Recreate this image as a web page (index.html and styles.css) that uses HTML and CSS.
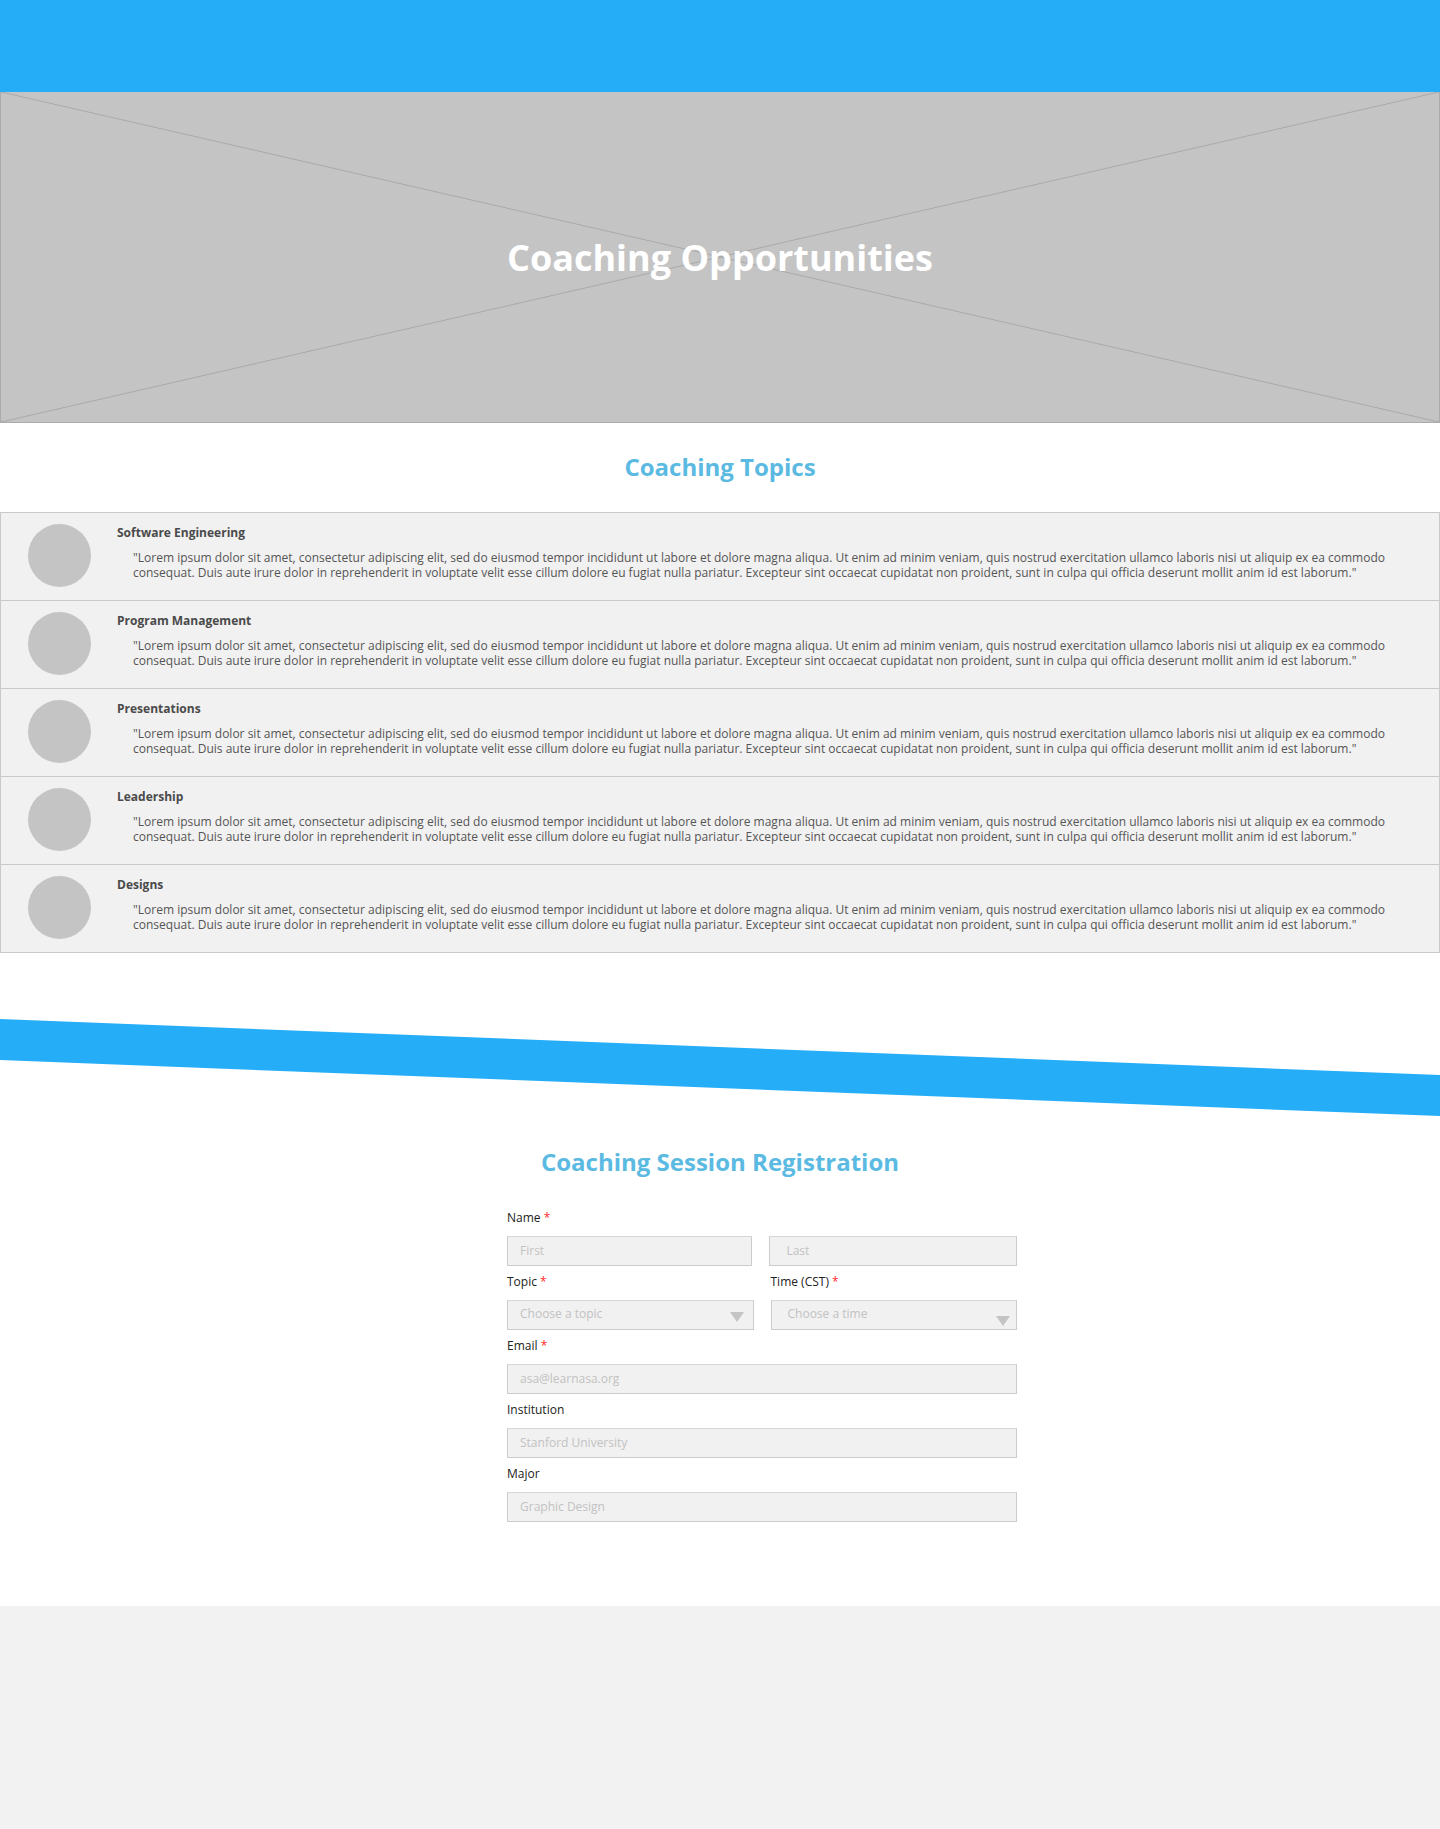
FILE: index.html
```html
<!DOCTYPE html>
<html lang="en">
<head>
<meta charset="utf-8">
<title>Coaching Opportunities</title>
<link rel="stylesheet" href="styles.css">
</head>
<body>
<header class="topbar"></header>

<section class="hero">
  <svg class="hero-x" viewBox="0 0 100 100" preserveAspectRatio="none" aria-hidden="true">
    <line x1="0" y1="0" x2="100" y2="100" vector-effect="non-scaling-stroke"/>
    <line x1="0" y1="100" x2="100" y2="0" vector-effect="non-scaling-stroke"/>
  </svg>
  <h1 class="hero-title">Coaching Opportunities</h1>
</section>

<h2 class="section-title topics-title">Coaching Topics</h2>

<ul class="topics">
  <li class="topic">
    <div class="avatar"></div>
    <div class="topic-text">
      <h3 class="topic-name">Software Engineering</h3>
      <p class="topic-desc">"Lorem ipsum dolor sit amet, consectetur adipiscing elit, sed do eiusmod tempor incididunt ut labore et dolore magna aliqua. Ut enim ad minim veniam, quis nostrud exercitation ullamco laboris nisi ut aliquip ex ea commodo consequat. Duis aute irure dolor in reprehenderit in voluptate velit esse cillum dolore eu fugiat nulla pariatur. Excepteur sint occaecat cupidatat non proident, sunt in culpa qui officia deserunt mollit anim id est laborum."</p>
    </div>
  </li>
  <li class="topic">
    <div class="avatar"></div>
    <div class="topic-text">
      <h3 class="topic-name">Program Management</h3>
      <p class="topic-desc">"Lorem ipsum dolor sit amet, consectetur adipiscing elit, sed do eiusmod tempor incididunt ut labore et dolore magna aliqua. Ut enim ad minim veniam, quis nostrud exercitation ullamco laboris nisi ut aliquip ex ea commodo consequat. Duis aute irure dolor in reprehenderit in voluptate velit esse cillum dolore eu fugiat nulla pariatur. Excepteur sint occaecat cupidatat non proident, sunt in culpa qui officia deserunt mollit anim id est laborum."</p>
    </div>
  </li>
  <li class="topic">
    <div class="avatar"></div>
    <div class="topic-text">
      <h3 class="topic-name">Presentations</h3>
      <p class="topic-desc">"Lorem ipsum dolor sit amet, consectetur adipiscing elit, sed do eiusmod tempor incididunt ut labore et dolore magna aliqua. Ut enim ad minim veniam, quis nostrud exercitation ullamco laboris nisi ut aliquip ex ea commodo consequat. Duis aute irure dolor in reprehenderit in voluptate velit esse cillum dolore eu fugiat nulla pariatur. Excepteur sint occaecat cupidatat non proident, sunt in culpa qui officia deserunt mollit anim id est laborum."</p>
    </div>
  </li>
  <li class="topic">
    <div class="avatar"></div>
    <div class="topic-text">
      <h3 class="topic-name">Leadership</h3>
      <p class="topic-desc">"Lorem ipsum dolor sit amet, consectetur adipiscing elit, sed do eiusmod tempor incididunt ut labore et dolore magna aliqua. Ut enim ad minim veniam, quis nostrud exercitation ullamco laboris nisi ut aliquip ex ea commodo consequat. Duis aute irure dolor in reprehenderit in voluptate velit esse cillum dolore eu fugiat nulla pariatur. Excepteur sint occaecat cupidatat non proident, sunt in culpa qui officia deserunt mollit anim id est laborum."</p>
    </div>
  </li>
  <li class="topic">
    <div class="avatar"></div>
    <div class="topic-text">
      <h3 class="topic-name">Designs</h3>
      <p class="topic-desc">"Lorem ipsum dolor sit amet, consectetur adipiscing elit, sed do eiusmod tempor incididunt ut labore et dolore magna aliqua. Ut enim ad minim veniam, quis nostrud exercitation ullamco laboris nisi ut aliquip ex ea commodo consequat. Duis aute irure dolor in reprehenderit in voluptate velit esse cillum dolore eu fugiat nulla pariatur. Excepteur sint occaecat cupidatat non proident, sunt in culpa qui officia deserunt mollit anim id est laborum."</p>
    </div>
  </li>
</ul>

<div class="band"></div>

<section class="register">
  <h2 class="section-title register-title">Coaching Session Registration</h2>
  <form class="form">
    <div class="field field-full">
      <label class="label">Name <span class="req">*</span></label>
      <div class="pair">
        <input class="input" type="text" placeholder="First">
        <input class="input input-right" type="text" placeholder="Last">
      </div>
    </div>
    <div class="pair">
      <div class="field">
        <label class="label">Topic <span class="req">*</span></label>
        <div class="select">
          <span class="select-text">Choose a topic</span>
          <svg class="caret" width="14" height="10" viewBox="0 0 14 10" aria-hidden="true"><path d="M0 0H14L7 10Z"/></svg>
        </div>
      </div>
      <div class="field">
        <label class="label">Time (CST) <span class="req">*</span></label>
        <div class="select select-right">
          <span class="select-text">Choose a time</span>
          <svg class="caret caret-low" width="14" height="10" viewBox="0 0 14 10" aria-hidden="true"><path d="M0 0H14L7 10Z"/></svg>
        </div>
      </div>
    </div>
    <div class="field">
      <label class="label">Email <span class="req">*</span></label>
      <input class="input" type="text" placeholder="asa@learnasa.org">
    </div>
    <div class="field">
      <label class="label">Institution</label>
      <input class="input" type="text" placeholder="Stanford University">
    </div>
    <div class="field">
      <label class="label">Major</label>
      <input class="input" type="text" placeholder="Graphic Design">
    </div>
  </form>
</section>

<footer class="footer"></footer>
</body>
</html>
```

FILE: styles.css
```css
* { box-sizing: border-box; }

body {
  margin: 0;
  font-family: "Open Sans", "Noto Sans", sans-serif;
  background: #ffffff;
  color: #333;
}

.topbar {
  height: 92px;
  background: #25adf7;
}

.hero {
  position: relative;
  height: 331px;
  background: #c4c4c4;
  border: 1px solid #ababab;
  border-top: 0;
  display: flex;
  align-items: center;
  justify-content: center;
}

.hero-x {
  position: absolute;
  inset: 0;
  width: 100%;
  height: 100%;
}
.hero-x line {
  stroke: #a9a9a9;
  stroke-width: 1;
}

.hero-title {
  position: relative;
  margin: 0;
  font-size: 36px;
  line-height: 49px;
  font-weight: 700;
  color: #ffffff;
}

.section-title {
  margin: 0;
  text-align: center;
  font-size: 24px;
  line-height: 33px;
  font-weight: 700;
  color: #5bbae2;
}

.topics-title {
  padding: 27px 0 29px;
}

.topics {
  list-style: none;
  margin: 0;
  padding: 0;
  border-top: 1px solid #c9c9c9;
}

.topic {
  display: flex;
  align-items: flex-start;
  gap: 26px;
  height: 88px;
  padding: 11px 40px 0 27px;
  background: #f1f1f1;
  border: 1px solid #c9c9c9;
  border-top: 0;
}

.avatar {
  flex: none;
  width: 63px;
  height: 63px;
  border-radius: 50%;
  background: #c4c4c4;
}

.topic-text {
  flex: 1;
}

.topic-name {
  margin: 0;
  font-size: 12px;
  line-height: 18px;
  font-weight: 700;
  color: #4a4a4a;
}

.topic-desc {
  margin: 8px 0 0;
  padding-left: 16px;
  font-size: 12px;
  line-height: 15px;
  color: #555555;
}

.band {
  margin-top: 66px;
  height: 97px;
  background: #25adf7;
  clip-path: polygon(0 0, 100% 56px, 100% 100%, 0 41px);
}

.register {
  padding-top: 29px;
  padding-bottom: 84px;
}

.register-title {
  margin-bottom: 31px;
}

.form {
  width: 510px;
  margin-left: calc(50% - 213px);
  display: flex;
  flex-direction: column;
  gap: 7px;
}

.field {
  display: flex;
  flex-direction: column;
  gap: 9px;
  flex: 1;
}

.pair {
  display: flex;
  gap: 17px;
}

.label {
  font-size: 12px;
  line-height: 18px;
  color: #222222;
}

.req {
  color: #ff2a2a;
}

.input,
.select {
  width: 100%;
  height: 30px;
  margin: 0;
  padding: 0 12px 2px;
  background: #f1f1f1;
  border: 1px solid #cccccc;
  border-top-color: #d6d6d6;
  border-radius: 0;
  font-family: "Open Sans", "Noto Sans", sans-serif;
  font-size: 12px;
  color: #555;
  outline: none;
}

.input::placeholder {
  color: #c2c2c2;
  opacity: 1;
}

.input-right,
.select-right {
  padding-left: 16px;
}

.select {
  position: relative;
  display: flex;
  align-items: center;
  padding-bottom: 0;
}

.select-text {
  color: #c2c2c2;
  line-height: 18px;
  margin-top: -3px;
}

.caret {
  position: absolute;
  right: 9px;
  top: 11px;
}
.caret path {
  fill: #c4c4c4;
}
.caret-low {
  right: 6px;
  top: 15px;
}

.footer {
  height: 223px;
  background: #f2f2f2;
}
```
